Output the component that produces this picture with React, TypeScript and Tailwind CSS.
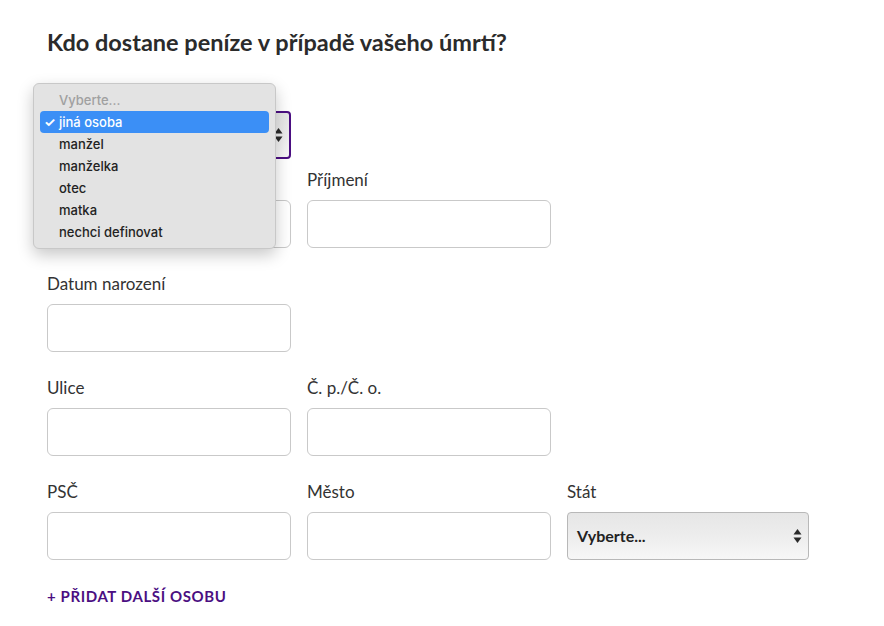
import React from "react";

const lato = { fontFamily: "Lato, 'Open Sans', sans-serif" };

function Field({ label }: { label: string }) {
  return (
    <div>
      <label className="block h-6 text-[17px] leading-6 text-[#333]">{label}</label>
      <input
        type="text"
        className="mt-2 block h-12 w-full rounded-md border border-[#c9c9c9] bg-white px-3 outline-none"
      />
    </div>
  );
}

function Arrows({ className = "" }: { className?: string }) {
  return (
    <svg width="9" height="16" viewBox="0 0 9 16" className={className}>
      <path d="M4.5 1 L8.5 6.5 L0.5 6.5 Z" fill="#2a2a2a" />
      <path d="M4.5 15 L8.5 9.5 L0.5 9.5 Z" fill="#2a2a2a" />
    </svg>
  );
}

function FakeSelect({ value, active = false }: { value: string; active?: boolean }) {
  return (
    <div
      className={
        "mt-2 flex h-12 items-center justify-between rounded-[4px] bg-gradient-to-b from-[#e6e6e6] via-[#ededed] to-[#f7f7f7] pl-[9px] pr-[6px] " +
        (active ? "border-2 border-[#4b0f82]" : "border border-[#b8b8b8]")
      }
    >
      <span className="text-[16px] font-bold text-[#222]">{value}</span>
      <Arrows />
    </div>
  );
}

const options = ["jiná osoba", "manžel", "manželka", "otec", "matka", "nechci definovat"];

function Dropdown() {
  return (
    <div
      className="absolute left-[33px] top-[83px] w-[243px] rounded-[6px] border border-[#c8c8c8] bg-[#e3e3e3] px-[6px] py-[5px] shadow-[0_6px_16px_rgba(0,0,0,0.22)]"
      style={{ fontFamily: "Inter, 'Liberation Sans', sans-serif" }}
    >
      <div className="h-[22px] pl-[19px] text-[13px] font-medium leading-[22px] text-[#a0a0a0]">Vyberte...</div>
      {options.map((o, i) => (
        <div
          key={o}
          className={
            "relative h-[22px] rounded-[4px] pl-[19px] text-[13px] font-medium leading-[22px] " +
            (i === 0 ? "bg-[#3b8ff6] text-white" : "text-[#222]")
          }
        >
          {i === 0 && <span className="absolute left-[4px] top-0 font-bold">✓</span>}
          {o}
        </div>
      ))}
    </div>
  );
}

export default function App() {
  return (
    <main className="relative min-h-[626px] bg-white pl-[47px] pt-[28px]" style={lato}>
      <h2 className="h-[28px] text-[23.5px] font-bold leading-[28px] text-[#2b2b2b]">
        Kdo dostane peníze v případě vašeho úmrtí?
      </h2>

      <div className="mt-[23px] w-[244px]">
        <label className="block h-6 text-[17px] leading-6 text-[#333]">Vztah</label>
        <FakeSelect value="jiná osoba" active />
      </div>

      <div className="mt-[9px] grid grid-cols-[244px_244px_242px] gap-x-4 gap-y-6">
        <Field label="Jméno" />
        <Field label="Příjmení" />
        <div />
        <Field label="Datum narození" />
        <div />
        <div />
        <Field label="Ulice" />
        <Field label="Č. p./Č. o." />
        <div />
        <Field label="PSČ" />
        <Field label="Město" />
        <div>
          <label className="block h-6 text-[17px] leading-6 text-[#333]">Stát</label>
          <FakeSelect value="Vyberte..." />
        </div>
      </div>

      <a
        href="#"
        className="mt-[28px] inline-block text-[15px] font-bold uppercase leading-4 tracking-[0.04em] text-[#4b0f82]"
      >
        + Přidat další osobu
      </a>

      <Dropdown />
    </main>
  );
}
